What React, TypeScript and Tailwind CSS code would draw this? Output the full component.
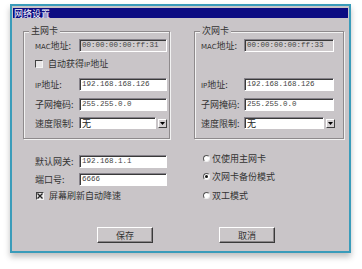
import React from 'react';

const font = { fontFamily: '"Noto Sans CJK SC", "Liberation Sans", sans-serif' };

const Field: React.FC<{ value: string; width: string; disabled?: boolean }> = ({ value, width, disabled }) => (
  <div
    className={`${width} h-[13px] flex items-center pl-[2px] border border-[#86828a] border-b-white border-r-white shadow-[inset_1px_1px_0_#3a3a3a] text-[7.5px] leading-none text-[#444] ${
      disabled ? 'bg-[#cfcbcd]' : 'bg-white'
    }`}
    style={{ fontFamily: '"Liberation Mono", monospace' }}
  >
    {value}
  </div>
);

const Select: React.FC<{ width: string }> = ({ width }) => (
  <div className="flex items-center gap-[2px]">
    <div className={`${width} h-[12px] bg-white border border-[#86828a] border-b-white border-r-white shadow-[inset_1px_1px_0_#3a3a3a] flex items-center pl-[2px] text-[9px] leading-none text-[#222]`}>
      无
    </div>
    <div className="w-[9px] h-[9px] bg-[#d4d0d2] border border-white border-b-[#404040] border-r-[#404040] flex items-center justify-center">
      <svg width="5" height="3" viewBox="0 0 5 3">
        <path d="M0 0h5L2.5 3z" fill="#000" />
      </svg>
    </div>
  </div>
);

const Label: React.FC<{ children: React.ReactNode; width: string }> = ({ children, width }) => (
  <div className={`${width} text-[9px] leading-none text-[#333] whitespace-nowrap`}>{children}</div>
);

const Latin: React.FC<{ children: React.ReactNode }> = ({ children }) => (
  <span className="text-[7px]" style={{ fontFamily: '"DejaVu Sans", sans-serif' }}>{children}</span>
);

const Checkbox: React.FC<{ checked?: boolean; label: React.ReactNode }> = ({ checked, label }) => (
  <div className="flex items-center gap-[5px] h-[11px]">
    <div className="w-[8px] h-[8px] bg-[#e8e6e7] border border-[#404040] border-b-[#f4f4f4] border-r-[#f4f4f4] flex items-center justify-center">
      {checked && (
        <svg width="6" height="6" viewBox="0 0 6 6">
          <path d="M0.5 0.5l5 5M5.5 0.5l-5 5" stroke="#222" strokeWidth="1.3" />
        </svg>
      )}
    </div>
    <span className="text-[9px] leading-none text-[#333]">{label}</span>
  </div>
);

const Radio: React.FC<{ checked?: boolean; label: string }> = ({ checked, label }) => (
  <div className="flex items-center gap-[2px] h-[11px]">
    <div className="w-[7px] h-[7px] rounded-full bg-white border border-[#555] border-b-[#eee] border-r-[#eee] flex items-center justify-center">
      {checked && <div className="w-[3px] h-[3px] rounded-full bg-[#111]" />}
    </div>
    <span className="text-[9px] leading-none text-[#333]">{label}</span>
  </div>
);

const GroupBox: React.FC<{ title: string; width: string; children: React.ReactNode }> = ({ title, width, children }) => (
  <div className={`relative ${width} h-[108px] border border-[#8e8a8c] shadow-[inset_1px_1px_0_#f2f2f2,1px_1px_0_#f2f2f2]`}>
    <div className="absolute -top-[6px] left-[5px] px-[2px] bg-[#c9c5c8] text-[9px] leading-none text-[#333]">{title}</div>
    {children}
  </div>
);

const Button: React.FC<{ label: string }> = ({ label }) => (
  <button className="w-[56px] h-[16px] bg-[#cbc7c9] border border-white border-b-[#3a3a3a] border-r-[#3a3a3a] shadow-[inset_-1px_-1px_0_#8a8688] text-[9px] leading-none text-[#333]">
    {label}
  </button>
);

export default function App() {
  return (
    <div className="w-[362px] h-[269px] bg-white pt-[4px] pl-[10px]" style={font}>
      <div className="w-[341px] h-[249px] border-2 border-[#3a9cba] bg-[#c9c5c8] shadow-[0_4px_6px_rgba(0,0,0,0.25)] flex flex-col">
        {/* Title bar */}
        <div className="mx-[1px] mt-[2px] h-[10px] bg-[#0c0c82] flex items-center pl-[1px] text-[9px] leading-none text-white">
          网络设置
        </div>

        {/* Adapter groups */}
        <div className="flex mt-[13px] ml-[11px] gap-[24px]">
          <GroupBox title="主网卡" width="w-[147px]">
            <div className="flex flex-col pt-[7px] pl-[11px]">
              <div className="flex items-center">
                <Label width="w-[44px]"><Latin>MAC</Latin>地址:</Label>
                <Field value="00:00:00:00:ff:31" width="w-[88px]" disabled />
              </div>
              <div className="mt-[6px]">
                <Checkbox label={<>自动获得<Latin>IP</Latin>地址</>} />
              </div>
              <div className="flex items-center mt-[9px]">
                <Label width="w-[44px]"><Latin>IP</Latin>地址:</Label>
                <Field value="192.168.168.126" width="w-[88px]" />
              </div>
              <div className="flex items-center mt-[7px]">
                <Label width="w-[44px]">子网掩码:</Label>
                <Field value="255.255.0.0" width="w-[88px]" />
              </div>
              <div className="flex items-center mt-[6px]">
                <Label width="w-[44px]">速度限制:</Label>
                <Select width="w-[77px]" />
              </div>
            </div>
          </GroupBox>

          <GroupBox title="次网卡" width="w-[150px]">
            <div className="flex flex-col pt-[7px] pl-[6px]">
              <div className="flex items-center">
                <Label width="w-[43px]"><Latin>MAC</Latin>地址:</Label>
                <Field value="00:00:00:00:ff:33" width="w-[90px]" disabled />
              </div>
              <div className="mt-[6px] h-[11px]" />
              <div className="flex items-center mt-[9px]">
                <Label width="w-[43px]"><Latin>IP</Latin>地址:</Label>
                <Field value="192.168.168.126" width="w-[90px]" />
              </div>
              <div className="flex items-center mt-[7px]">
                <Label width="w-[43px]">子网掩码:</Label>
                <Field value="255.255.0.0" width="w-[90px]" />
              </div>
              <div className="flex items-center mt-[6px]">
                <Label width="w-[43px]">速度限制:</Label>
                <Select width="w-[80px]" />
              </div>
            </div>
          </GroupBox>
        </div>

        {/* Gateway, port and mode */}
        <div className="flex mt-[16px] ml-[23px] gap-[36px]">
          <div className="flex flex-col w-[132px]">
            <div className="flex items-center">
              <Label width="w-[44px]">默认网关:</Label>
              <Field value="192.168.1.1" width="w-[88px]" />
            </div>
            <div className="flex items-center mt-[5px]">
              <Label width="w-[44px]">端口号:</Label>
              <Field value="6666" width="w-[88px]" />
            </div>
            <div className="mt-[4px] pl-[1px]">
              <Checkbox checked label="屏幕刷新自动降速" />
            </div>
          </div>
          <div className="flex flex-col -mt-[2px]">
            <Radio label="仅使用主网卡" />
            <div className="mt-[7px]">
              <Radio checked label="次网卡备份模式" />
            </div>
            <div className="mt-[8px]">
              <Radio label="双工模式" />
            </div>
          </div>
        </div>

        {/* Buttons */}
        <div className="flex mt-[26px] ml-[85px] gap-[66px]">
          <Button label="保存" />
          <Button label="取消" />
        </div>
      </div>
    </div>
  );
}
